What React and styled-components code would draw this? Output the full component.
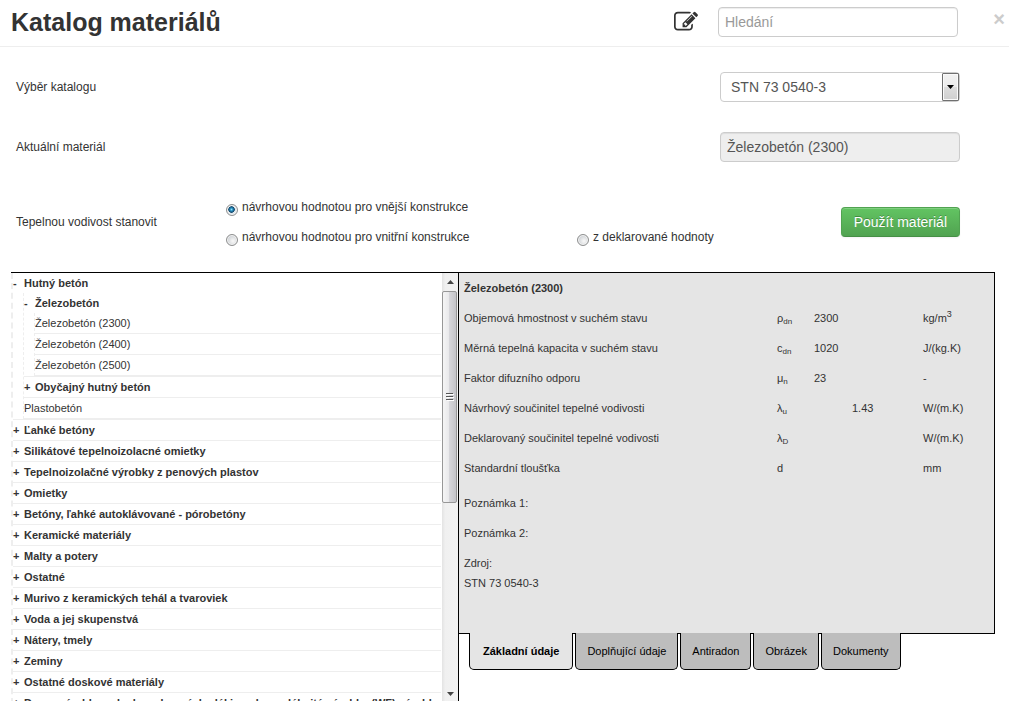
import React, { useState } from 'react';
import styled, { createGlobalStyle } from 'styled-components';

const GlobalStyle = createGlobalStyle`
  * {
    box-sizing: border-box;
  }

  body {
    margin: 0;
    background: #fff;
    color: #333;
    font-family: "Liberation Sans", Arial, sans-serif;
    font-size: 12px;
    line-height: 20px;
  }

  button, input, select {
    font-family: inherit;
  }
`;

const Page = styled.div`
  height: 100vh;
  overflow: hidden;
`;

const Header = styled.header`
  display: flex;
  align-items: center;
  height: 47px;
  padding: 0 4px 3px 11px;
  border-bottom: 1px solid #eee;
`;

const Title = styled.h1`
  flex: 1;
  margin: 0;
  font-size: 25px;
  line-height: 40px;
`;

const IconButton = styled.button`
  display: flex;
  padding: 0;
  margin-right: 20px;
  border: none;
  background: none;
  color: #333;
  cursor: pointer;
`;

const CloseButton = styled.button`
  width: 12px;
  margin-left: 35px;
  padding: 0 0 6px;
  border: none;
  background: none;
  color: #ccc;
  font-size: 20px;
  font-weight: bold;
  line-height: 20px;
  cursor: pointer;
`;

const TextInput = styled.input`
  width: 240px;
  height: 30px;
  padding: 4px 6px;
  border: 1px solid #ccc;
  border-radius: 4px;
  background: #fff;
  box-shadow: inset 0 1px 1px rgba(0, 0, 0, 0.075);
  color: #555;
  font-size: 14px;

  &::placeholder {
    color: #999;
  }

  &:read-only {
    background: #eee;
  }
`;

const Form = styled.form`
  padding: 10px 49px 5px 16px;
`;

const FormRow = styled.div`
  display: flex;
  align-items: center;
  justify-content: space-between;
  height: ${props => (props.$tall ? 90 : 60)}px;
`;

const SelectWrap = styled.div`
  position: relative;
  width: 240px;
`;

const Select = styled.select`
  appearance: none;
  display: block;
  width: 100%;
  height: 30px;
  padding: 4px 10px;
  border: 1px solid #ccc;
  border-radius: 4px;
  background: #fff;
  color: #555;
  font-size: 14px;
`;

const SelectArrow = styled.span`
  position: absolute;
  top: 1px;
  right: 1px;
  bottom: 1px;
  display: flex;
  align-items: center;
  justify-content: center;
  width: 17px;
  border: 1px solid #707070;
  border-radius: 1px;
  background: linear-gradient(#f2f2f2, #ebebeb 50%, #ddd 50%, #cfcfcf);
  box-shadow: inset 0 0 0 1px #fafafa;
  pointer-events: none;
`;

const RowLabel = styled.span`
  width: 210px;
`;

const RadioGroup = styled.div`
  flex: 1;
  display: grid;
  grid-template-columns: 351px 1fr;
  grid-auto-rows: 30px;
`;

const RadioLabel = styled.label`
  grid-column: ${props => props.$column};
  display: flex;
  align-items: center;
  gap: 4px;
`;

const Radio = styled.input`
  appearance: none;
  width: 12px;
  height: 12px;
  margin: 6px 0 0;
  border: 1px solid #8e8f8f;
  border-radius: 50%;
  background: radial-gradient(circle at 60% 60%, #f4f4f4 10%, #ccd0d4 70%);
  box-shadow: inset 0 0 0 1px #f4f4f4;

  &:checked {
    background: radial-gradient(circle at 45% 45%, #8fe0fa 0, #2a8fc0 18%, #0f4468 38%, #dfe6ea 46%);
  }
`;

const ApplyButton = styled.button`
  height: 30px;
  padding: 4px 12px;
  border: 1px solid;
  border-color: #51a351 #51a351 #468f46;
  border-radius: 4px;
  background: linear-gradient(#62c462, #51a351);
  box-shadow: inset 0 1px 0 rgba(255, 255, 255, 0.2), 0 1px 2px rgba(0, 0, 0, 0.05);
  color: #fff;
  font-size: 14px;
  line-height: 20px;
  text-shadow: 0 -1px 0 rgba(0, 0, 0, 0.25);
  cursor: pointer;
`;

const Browser = styled.main`
  display: grid;
  grid-template-columns: 448px 1fr;
  margin: 0 14px 0 11px;
`;

const TreePane = styled.nav`
  display: flex;
  height: 431px;
  border-top: 1px solid #000;
  border-right: 1px solid #000;
  font-size: 11px;
`;

const TreeScroll = styled.div`
  flex: 1;
  overflow: hidden;
  padding-right: 1px;
`;

const Branch = styled.ul`
  margin: 0 0 0 ${props => (props.$root ? 0 : 10)}px;
  padding: 0;
  border-left: ${props => (props.$root ? 2 : 1)}px dashed #eee;
  list-style: none;
`;

const Node = styled.li`
  border-bottom: 1px solid #eee;
`;

const NodeButton = styled.button`
  display: flex;
  width: 100%;
  padding: 0;
  border: none;
  background: none;
  color: #333;
  font-size: 11px;
  font-weight: ${props => (props.$folder ? 'bold' : 'normal')};
  line-height: 20px;
  text-align: left;
  white-space: nowrap;
  cursor: pointer;
`;

const Marker = styled.span`
  width: 11px;
`;

const ScrollTrack = styled.div`
  display: flex;
  flex-direction: column;
  width: 16px;
  background: linear-gradient(to right, #e3e3e3, #f0f0f0 20%, #f2f2f2);
`;

const ScrollArrow = styled.div`
  display: flex;
  align-items: center;
  justify-content: center;
  height: 18px;
`;

const ScrollThumb = styled.div`
  display: flex;
  align-items: center;
  justify-content: center;
  height: 212px;
  margin-right: 1px;
  margin-bottom: auto;
  border: 1px solid #979797;
  border-radius: 2px;
  background: linear-gradient(to right, #f5f5f5, #e9e9eb 45%, #d6d6da 50%, #c4c4c8);
`;

const Detail = styled.section`
  height: 362px;
  padding: 5px 0 0 5px;
  border: solid #000;
  border-width: 1px 1px 1px 0;
  background: #e5e5e5;
  font-size: 11px;
`;

const DetailTitle = styled.h2`
  margin: 0 0 5px;
  font-size: 11px;
  line-height: 20px;
`;

const Properties = styled.table`
  width: 100%;
  table-layout: fixed;
  border-collapse: collapse;

  th, td {
    height: 30px;
    padding: 0;
    font-weight: normal;
    text-align: left;
  }

  sub, sup {
    position: relative;
    font-size: 8px;
    line-height: 0;
    vertical-align: baseline;
  }

  sub {
    bottom: -2px;
  }

  sup {
    top: -5px;
    font-size: 9px;
  }
`;

const Column = styled.col`
  width: ${props => props.$width}px;
`;

const Note = styled.p`
  margin: 0 0 10px;

  ${Properties} + & {
    margin-top: 10px;
  }
`;

const Tabs = styled.div`
  position: relative;
  display: flex;
  gap: 2px;
  margin: -1px 0 0 10px;
`;

const Tab = styled.button`
  height: 37px;
  padding: 0 ${props => (props.$active ? 13 : 11)}px;
  border: solid #000;
  border-width: 0 1px 1px;
  border-radius: 0 0 5px 5px;
  background: ${props => (props.$active ? '#e5e5e5' : '#bdbdbd')};
  color: #000;
  font-size: 11px;
  font-weight: ${props => (props.$active ? 'bold' : 'normal')};
  cursor: pointer;
`;

const tree = [
  {
    name: 'Hutný betón',
    children: [
      {
        name: 'Železobetón',
        children: [
          { name: 'Železobetón (2300)' },
          { name: 'Železobetón (2400)' },
          { name: 'Železobetón (2500)' },
        ],
      },
      { name: 'Obyčajný hutný betón', folder: true },
      { name: 'Plastobetón' },
    ],
  },
  { name: 'Ľahké betóny', folder: true },
  { name: 'Silikátové tepelnoizolacné omietky', folder: true },
  { name: 'Tepelnoizolačné výrobky z penových plastov', folder: true },
  { name: 'Omietky', folder: true },
  { name: 'Betóny, ľahké autoklávované - pórobetóny', folder: true },
  { name: 'Keramické materiály', folder: true },
  { name: 'Malty a potery', folder: true },
  { name: 'Ostatné', folder: true },
  { name: 'Murivo z keramických tehál a tvaroviek', folder: true },
  { name: 'Voda a jej skupenstvá', folder: true },
  { name: 'Nátery, tmely', folder: true },
  { name: 'Zeminy', folder: true },
  { name: 'Ostatné doskové materiály', folder: true },
  { name: 'Drevo-výrobky a dosky z drevných vlákien, drevovláknité výrobky (WF) výrobky', folder: true },
];

const properties = [
  { label: 'Objemová hmostnost v suchém stavu', symbol: 'ρ', sub: 'dn', value: '2300', unit: <>kg/m<sup>3</sup></> },
  { label: 'Měrná tepelná kapacita v suchém stavu', symbol: 'c', sub: 'dn', value: '1020', unit: 'J/(kg.K)' },
  { label: 'Faktor difuzního odporu', symbol: 'μ', sub: 'n', value: '23', unit: '-' },
  { label: 'Návrhový součinitel tepelné vodivosti', symbol: 'λ', sub: 'u', design: '1.43', unit: 'W/(m.K)' },
  { label: 'Deklarovaný součinitel tepelné vodivosti', symbol: 'λ', sub: 'D', unit: 'W/(m.K)' },
  { label: 'Standardní tloušťka', symbol: 'd', unit: 'mm' },
];

const tabs = ['Základní údaje', 'Doplňující údaje', 'Antiradon', 'Obrázek', 'Dokumenty'];

const EditIcon = () => (
  <svg width="24" height="24" viewBox="0 0 1792 1792" fill="currentColor" aria-hidden="true">
    <path d="M888 1184l116-116-152-152-116 116v56h96v96h56zm440-720q-16-16-33 1l-350 350q-17 17-1 33t33-1l350-350q17-17 1-33zm80 594v190q0 119-84.5 203.5t-203.5 84.5h-832q-119 0-203.5-84.5t-84.5-203.5v-832q0-119 84.5-203.5t203.5-84.5h832q63 0 117 25 15 7 18 23 3 17-9 29l-49 49q-14 14-32 8-23-6-45-6h-832q-66 0-113 47t-47 113v832q0 66 47 113t113 47h832q66 0 113-47t47-113v-126q0-13 9-22l64-64q15-15 35-7t20 29zm-96-738l288 288-672 672h-288v-288zm444 132l-92 92-288-288 92-92q28-28 68-28t68 28l152 152q28 28 28 68t-28 68z" />
  </svg>
);

const Arrow = ({ up }) => (
  <svg width="7" height="4" viewBox="0 0 7 4" fill={up === undefined ? '#000' : '#444'} aria-hidden="true">
    <path d={up ? 'M0 4L3.5 0L7 4z' : 'M0 0L3.5 4L7 0z'} />
  </svg>
);

const Grip = () => (
  <svg width="8" height="8" viewBox="0 0 8 8" aria-hidden="true">
    <path d="M0 1h7M0 4h7M0 7h7" stroke="#fff" transform="translate(1 .5)" />
    <path d="M0 .5h7M0 3.5h7M0 6.5h7" stroke="#555" />
  </svg>
);

const TreeNode = ({ item }) => {
  const [open, setOpen] = useState(Boolean(item.children));
  const isFolder = Boolean(item.folder || item.children);

  return (
    <Node>
      <NodeButton
        type="button"
        $folder={isFolder}
        aria-expanded={isFolder ? open : undefined}
        onClick={() => item.children && setOpen(!open)}
      >
        {isFolder && <Marker>{open ? '-' : '+'}</Marker>}
        {item.name}
      </NodeButton>
      {open && item.children && (
        <Branch>
          {item.children.map(child => <TreeNode key={child.name} item={child} />)}
        </Branch>
      )}
    </Node>
  );
};

const App = () => {
  const [activeTab, setActiveTab] = useState(tabs[0]);

  return (
    <Page>
      <GlobalStyle />
      <Header>
        <Title>Katalog materiálů</Title>
        <IconButton type="button" aria-label="Upravit"><EditIcon /></IconButton>
        <TextInput type="text" placeholder="Hledání" aria-label="Hledání" />
        <CloseButton type="button" aria-label="Zavřít">×</CloseButton>
      </Header>

      <Form onSubmit={e => e.preventDefault()}>
        <FormRow>
          <label htmlFor="catalog">Výběr katalogu</label>
          <SelectWrap>
            <Select id="catalog">
              <option>STN 73 0540-3</option>
            </Select>
            <SelectArrow><Arrow /></SelectArrow>
          </SelectWrap>
        </FormRow>
        <FormRow>
          <label htmlFor="material">Aktuální materiál</label>
          <TextInput id="material" type="text" value="Železobetón (2300)" readOnly />
        </FormRow>
        <FormRow $tall>
          <RowLabel id="conductivity">Tepelnou vodivost stanovit</RowLabel>
          <RadioGroup role="radiogroup" aria-labelledby="conductivity">
            <RadioLabel $column={1}>
              <Radio type="radio" name="conductivity" defaultChecked />
              návrhovou hodnotou pro vnější konstrukce
            </RadioLabel>
            <RadioLabel $column={1}>
              <Radio type="radio" name="conductivity" />
              návrhovou hodnotou pro vnitřní konstrukce
            </RadioLabel>
            <RadioLabel $column={2}>
              <Radio type="radio" name="conductivity" />
              z deklarované hodnoty
            </RadioLabel>
          </RadioGroup>
          <ApplyButton type="submit">Použít materiál</ApplyButton>
        </FormRow>
      </Form>

      <Browser>
        <TreePane>
          <TreeScroll>
            <Branch $root>
              {tree.map(item => <TreeNode key={item.name} item={item} />)}
            </Branch>
          </TreeScroll>
          <ScrollTrack aria-hidden="true">
            <ScrollArrow><Arrow up /></ScrollArrow>
            <ScrollThumb><Grip /></ScrollThumb>
            <ScrollArrow><Arrow up={false} /></ScrollArrow>
          </ScrollTrack>
        </TreePane>

        <div>
          <Detail>
            <DetailTitle>Železobetón (2300)</DetailTitle>
            <Properties>
              <colgroup>
                <col />
                <Column $width={37} />
                <Column $width={38} />
                <Column $width={71} />
                <Column $width={71} />
              </colgroup>
              <tbody>
                {properties.map(row => (
                  <tr key={row.label}>
                    <th scope="row">{row.label}</th>
                    <td>{row.symbol}{row.sub && <sub>{row.sub}</sub>}</td>
                    <td>{row.value}</td>
                    <td>{row.design}</td>
                    <td>{row.unit}</td>
                  </tr>
                ))}
              </tbody>
            </Properties>
            <Note>Poznámka 1:</Note>
            <Note>Poznámka 2:</Note>
            <Note>Zdroj:<br />STN 73 0540-3</Note>
          </Detail>
          <Tabs role="tablist">
            {tabs.map(name => (
              <Tab
                key={name}
                type="button"
                role="tab"
                aria-selected={name === activeTab}
                $active={name === activeTab}
                onClick={() => setActiveTab(name)}
              >
                {name}
              </Tab>
            ))}
          </Tabs>
        </div>
      </Browser>
    </Page>
  );
};

export default App;
